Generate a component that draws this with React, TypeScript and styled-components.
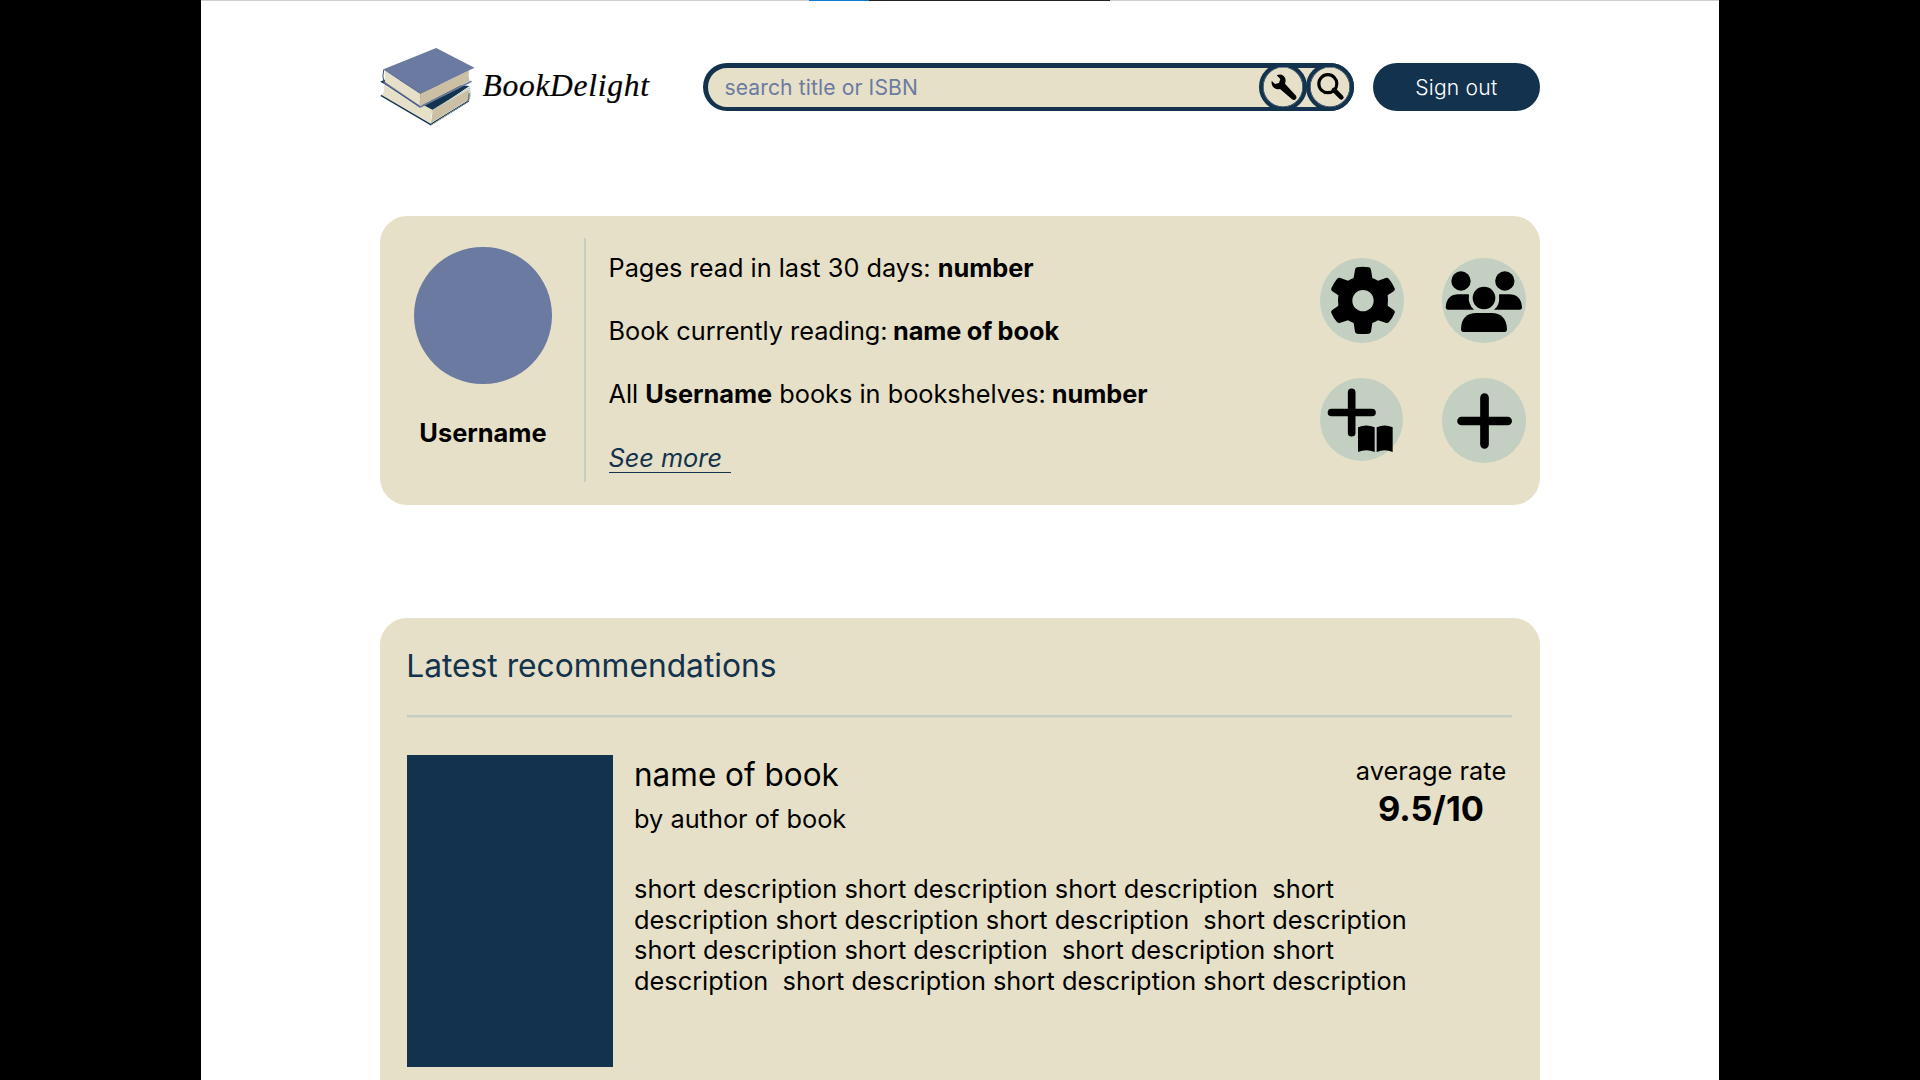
import React from "react";
import styled, { createGlobalStyle } from "styled-components";

const color = {
  navy: "#12324d",
  sand: "#e6e0c8",
  slate: "#6b7aa1",
  sage: "#c2cfc1",
};

const GlobalStyle = createGlobalStyle`
  * { box-sizing: border-box; }
  html, body { margin: 0; background: #000; overflow: hidden; }
  body { font-family: Inter, "Liberation Sans", sans-serif; font-weight: 400; color: #000; }
  h1, h2, h3, p { margin: 0; font-weight: inherit; }
  button { font: inherit; border: 0; padding: 0; }
`;

const Page = styled.div`
  width: 1518px;
  height: 1080px;
  margin: 0 auto;
  background: #fff;
  overflow: hidden;
  display: flex;
  flex-direction: column;
`;

const TopStrip = styled.div`
  display: flex;
  flex: none;
  height: 1px;
  background: #cfcfcf;
  padding-left: 608px;
`;

const StripSegment = styled.span<{ $width: number; $fill: string }>`
  width: ${(p) => p.$width}px;
  background: ${(p) => p.$fill};
`;

const Header = styled.header`
  display: flex;
  flex: none;
  height: 142px;
  padding: 0 179.2px 0 178.5px;
`;

const Brand = styled.a`
  display: flex;
  width: 323.4px;
  flex: none;
`;

const BrandMark = styled.svg`
  width: 96px;
  height: 80px;
  margin: 45px 1px 0 -1px;
  flex: none;
`;

const BrandName = styled.h1`
  margin: 65px 0 0 7px;
  font-family: "Liberation Serif", serif;
  font-style: italic;
  font-weight: 400;
  font-size: 31.5px;
  line-height: 40px;
  letter-spacing: 0.72px;
  white-space: nowrap;
  -webkit-text-stroke: 0.2px #000;
`;

const SearchBar = styled.div`
  display: flex;
  width: 651px;
  height: 48px;
  margin-top: 62px;
  border-radius: 24px;
  border: 4px solid ${color.navy};
  border-left-width: 5px;
  border-top-width: 5px;
  background: ${color.sand};
  flex: none;
`;

const SearchHint = styled.span`
  flex: 1;
  padding-left: 16.5px;
  font-size: 21.1px;
  letter-spacing: 0.12px;
  line-height: 40.5px;
  color: ${color.slate};
`;

const RoundTool = styled.button`
  display: block;
  width: 47.8px;
  height: 47.8px;
  margin: -4.8px -4px 0 3.3px;
  border: 4px solid ${color.navy};
  border-radius: 50%;
  background: ${color.sand};
  box-shadow: inset 0 0 0 0.6px ${color.navy};
  flex: none;

  svg { display: block; width: 39.5px; height: 39.5px; }
`;

const SignOut = styled.button`
  width: 167px;
  height: 47.7px;
  margin: 62.3px 0 0 auto;
  border-radius: 24px;
  background: ${color.navy};
  color: #fff;
  font-size: 21.1px;
  font-weight: 300;
  letter-spacing: 0.2px;
  padding-top: 1px;
  flex: none;
`;

const Card = styled.section<{ $top: number; $height: number }>`
  flex: none;
  width: 1160.4px;
  height: ${(p) => p.$height}px;
  margin: ${(p) => p.$top}px 0 0 178.5px;
  border-radius: 27px;
  background: ${color.sand};
`;

const ProfileCard = styled(Card)`
  display: flex;
`;

const Identity = styled.div`
  width: 206px;
  padding: 30.6px 0 0 1px;
  display: flex;
  flex-direction: column;
  align-items: center;
  font-size: 25.4px;
  font-weight: 700;
  line-height: 30.6px;
`;

const Avatar = styled.div`
  width: 137.4px;
  height: 137.4px;
  margin-bottom: 34px;
  border-radius: 50%;
  background: ${color.slate};
`;

const VerticalRule = styled.div`
  width: 2px;
  height: 244px;
  margin: 22px 22.5px 0 -1.5px;
  background: ${color.sage};
`;

const Stats = styled.div`
  display: flex;
  flex-direction: column;
  align-items: flex-start;
  gap: 32.6px;
  width: 711.7px;
  padding-top: 36.7px;
  font-size: 25.3px;
  line-height: 30.6px;
  white-space: pre;
  b { font-weight: 700; }
`;

const ReadingStat = styled.p`
  letter-spacing: -0.02px;
  b { word-spacing: -0.6px; letter-spacing: -0.04px; }
`;

const SeeMore = styled.a`
  height: 30px;
  padding-right: 1.5px;
  font-style: italic;
  color: ${color.navy};
  border-bottom: 1.5px solid ${color.navy};
`;

const Actions = styled.div`
  display: grid;
  grid-template-columns: 84px 84px;
  column-gap: 37.5px;
  row-gap: 35.5px;
  align-content: start;
  padding-top: 42.2px;
`;

const Action = styled.button<{ $size?: number }>`
  display: block;
  width: ${(p) => p.$size ?? 84.3}px;
  height: ${(p) => p.$size ?? 84.5}px;
  border-radius: 50%;
  background: ${color.sage};

  svg { display: block; width: 84px; height: 84px; overflow: visible; }
`;

const FeedCard = styled(Card)`
  padding: 29px 27.5px 0 27.5px;
`;

const FeedTitle = styled.h2`
  height: 68.3px;
  font-size: 31.75px;
  margin-left: -0.8px;
  line-height: 37px;
  color: ${color.navy};
`;

const Rule = styled.div`
  height: 3px;
  background: ${color.sage};
  border-bottom: 1px solid #d4d8c5;
`;

const BookRow = styled.article`
  display: flex;
  padding-top: 37px;
`;

const Cover = styled.div`
  width: 206px;
  height: 311.5px;
  margin-right: 21px;
  background: ${color.navy};
  flex: none;
`;

const BookInfo = styled.div`
  width: 800px;
  flex: none;
  padding-top: 1px;
  font-size: 25.35px;
  line-height: 30.6px;
`;

const BookTitle = styled.h3`
  font-size: 31.5px;
  line-height: 38px;
`;

const Author = styled.p`
  margin-top: 10px;
`;

const Description = styled.p`
  margin-top: 39.2px;
  white-space: pre;
`;

const Rating = styled.div`
  width: 153px;
  margin-left: -79.5px;
  padding-top: 1px;
  display: flex;
  flex-direction: column;
  align-items: center;
  font-size: 25.4px;
  line-height: 30.6px;
  white-space: nowrap;
`;

const Score = styled.strong`
  font-size: 34.4px;
  font-weight: 700;
  line-height: 40px;
  margin-top: 2.3px;
`;

const BooksLogo = () => (
  <BrandMark viewBox="28.5 48 288 240">
    <path d="M32 155 L48 148 L300 168 L190 242 Z" fill={color.navy} />
    <path d="M43 163 L190 240 Q182 260 184 280 L37 196 Q47 182 43 163Z" fill={color.sand} />
    <path d="M190 240 L298 178 Q302 195 296 210 L184 280 Q187 258 190 240Z" fill="#cbc0a4" />
    <path d="M34 196 L184 284 L298 213" fill="none" stroke={color.navy} strokeWidth="4" />
    <path d="M188 241 L300 173 Q305 196 299 211 L184 286" fill="none" stroke="#b4c6bd" strokeWidth="3" />
    <path d="M186 281 L294 214 Q299 209 299 190" fill="none" stroke={color.navy} strokeWidth="2.5" />
    <path d="M46 122 L154 190 L150 231 L46 161Z" fill={color.sand} />
    <path d="M154 190 L299 121 Q295 139 300 153 L150 230 Q150 208 154 190Z" fill="#cbc0a4" />
    <path d="M42 156 L152 231 L306 154" fill="none" stroke={color.slate} strokeWidth="5" />
    <path d="M43 118 Q37 137 44 160 L150 229" fill="none" stroke="#3f5088" strokeWidth="3" />
    <path d="M200 54 L315 113 L153 191 L42 118Z" fill={color.slate} />
    <path d="M44 119 L153 191" fill="none" stroke="#4d5d90" strokeWidth="2" />
  </BrandMark>
);

const Wrench = () => (
  <svg viewBox="100 52 118.5 118.5">
    <path d="M141 77 Q149 73 156 75 Q167 80 168 92 Q168 98 166 102 L199 138 Q203 144 198 149 Q193 153 187 149 L151 118 Q142 121 134 115 Q124 107 126 93 L136 103 L148 100 L152 88Z" />
  </svg>
);

const Magnifier = () => (
  <svg viewBox="240 52 118.5 118.5">
    <circle cx="293.5" cy="102" r="27" fill="none" stroke="#000" strokeWidth="9.5" />
    <path d="M312 121 L334 143" stroke="#000" strokeWidth="14" strokeLinecap="round" />
  </svg>
);

const Gear = () => (
  <svg viewBox="61 161 252 252">
    <path
      fillRule="evenodd"
      d="M172 186 Q190 183 208 186 Q213 187 214 193 L218 218 Q227 221 235 226 L258 218 Q264 216 268 221 Q279 234 285 249 Q287 254 283 257 L264 270 Q266 285 264 301 L283 315 Q287 318 285 323 Q279 338 268 350 Q264 354 258 352 L235 345 Q227 350 218 353 L214 379 Q213 384 208 385 Q190 387 172 385 Q167 384 166 379 L162 353 Q153 350 145 345 L122 352 Q116 354 112 350 Q101 338 95 323 Q93 318 97 315 L116 301 Q114 285 116 270 L97 257 Q93 254 95 249 Q101 234 112 221 Q116 216 122 218 L145 226 Q153 221 162 218 L166 193 Q167 187 172 186Z M222 286 A32 32 0 1 0 158 286 A32 32 0 1 0 222 286Z"
    />
  </svg>
);

const People = () => (
  <svg viewBox="426 162 252 252">
    <circle cx="483" cy="228" r="29" />
    <circle cx="614.5" cy="228" r="29" />
    <circle cx="552" cy="279" r="34" />
    <path d="M443 314 Q437 314 437 307 Q440 268 476 268 H504 Q508 268 507 272 Q503 296 522 314Z" />
    <path d="M660 314 Q666 314 666 307 Q663 268 627 268 H600 Q596 268 597 272 Q601 299 582 314Z" />
    <path d="M483 371 Q485 324 530 324 H574 Q618 324 621 371 Q621 381 612 381 H492 Q483 381 483 371Z" />
  </svg>
);

const AddBook = () => (
  <svg viewBox="61 521 252 252">
    <path d="M95.500 624.500 H217 M156 564 V685" stroke="#000" strokeWidth="23" strokeLinecap="round" />
    <path d="M175 669 Q200 658 225 669 V743 Q200 733 175 743Z M231 669 Q255 658 279 669 V743 Q255 733 231 743Z" />
  </svg>
);

const Plus = () => (
  <svg viewBox="426 521 252 252">
    <path d="M484.500 647 H623 M553.500 577 V717" stroke="#000" strokeWidth="26" strokeLinecap="round" />
  </svg>
);

const description = [
  "short description short description short description  short",
  "description short description short description  short description",
  "short description short description  short description short",
  "description  short description short description short description",
].join("\n");

export default function App() {
  return (
    <>
      <GlobalStyle />
      <Page>
        <TopStrip>
          <StripSegment $width={60} $fill="#0b7ad6" />
          <StripSegment $width={241} $fill="#222" />
        </TopStrip>
        <Header>
          <Brand>
            <BooksLogo />
            <BrandName>BookDelight</BrandName>
          </Brand>
          <SearchBar>
            <SearchHint>search title or ISBN</SearchHint>
            <RoundTool aria-label="Filters"><Wrench /></RoundTool>
            <RoundTool aria-label="Search"><Magnifier /></RoundTool>
          </SearchBar>
          <SignOut>Sign out</SignOut>
        </Header>

        <ProfileCard $top={73.3} $height={288.7}>
          <Identity>
            <Avatar />
            Username
          </Identity>
          <VerticalRule />
          <Stats>
            <p>Pages read in last 30 days: <b>number</b></p>
            <ReadingStat>Book currently reading:<b> name of book</b></ReadingStat>
            <p>All <b>Username</b> books in bookshelves:<b> number</b></p>
            <SeeMore>{"See more "}</SeeMore>
          </Stats>
          <Actions>
            <Action aria-label="Settings"><Gear /></Action>
            <Action aria-label="Friends"><People /></Action>
            <Action aria-label="Add book" $size={83}><AddBook /></Action>
            <Action aria-label="Add"><Plus /></Action>
          </Actions>
        </ProfileCard>

        <FeedCard $top={113.2} $height={520}>
          <FeedTitle>Latest recommendations</FeedTitle>
          <Rule />
          <BookRow>
            <Cover />
            <BookInfo>
              <BookTitle>name of book</BookTitle>
              <Author>by author of book</Author>
              <Description>{description}</Description>
            </BookInfo>
            <Rating>
              average rate
              <Score>9.5/10</Score>
            </Rating>
          </BookRow>
        </FeedCard>
      </Page>
    </>
  );
}
